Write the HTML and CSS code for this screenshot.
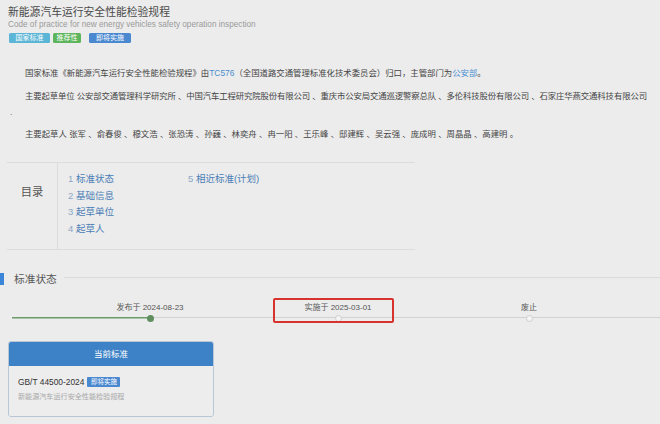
FILE: index.html
```html
<!DOCTYPE html>
<html lang="zh-CN">
<head>
<meta charset="utf-8">
<title>新能源汽车运行安全性能检验规程</title>
<link rel="stylesheet" href="styles.css">
</head>
<body>
<div class="page">
  <header class="head">
    <h1 class="title">新能源汽车运行安全性能检验规程</h1>
    <div class="subtitle">Code of practice for new energy vehicles safety operation inspection</div>
    <div class="badges">
      <span class="badge badge-cyan">国家标准</span>
      <span class="badge badge-green">推荐性</span>
      <span class="badge badge-blue">即将实施</span>
    </div>
  </header>

  <section class="intro">
    <p class="para p1">国家标准《新能源汽车运行安全性能检验规程》由<a class="link">TC576</a>（全国道路交通管理标准化技术委员会）归口，主管部门为<a class="link">公安部</a>。</p>
    <p class="para p2">主要起草单位 公安部交通管理科学研究所 、中国汽车工程研究院股份有限公司 、重庆市公安局交通巡逻警察总队 、多伦科技股份有限公司 、石家庄华燕交通科技有限公司</p>
    <div class="dot-line">.</div>
    <p class="para p3">主要起草人 张军 、俞春俊 、穆文浩 、张恐涛 、孙巍 、林奕舟 、冉一阳 、王乐峰 、邸建辉 、吴云强 、庞成明 、周晶晶 、高建明 。</p>
  </section>

  <nav class="toc">
    <div class="toc-label">目录</div>
    <div class="toc-body">
      <ul class="toc-col col1">
        <li><span class="num">1</span> 标准状态</li>
        <li><span class="num">2</span> 基础信息</li>
        <li><span class="num">3</span> 起草单位</li>
        <li><span class="num">4</span> 起草人</li>
      </ul>
      <ul class="toc-col">
        <li><span class="num">5</span> 相近标准(计划)</li>
      </ul>
    </div>
  </nav>

  <h2 class="section-title"><span class="bar"></span><span class="section-text">标准状态</span><span class="rule"></span></h2>

  <div class="timeline">
    <div class="step done">
      <div class="step-label">发布于 2024-08-23</div>
      <div class="step-dot"></div>
    </div>
    <div class="step marked">
      <div class="step-label">实施于 2025-03-01</div>
      <div class="step-dot"></div>
    </div>
    <div class="step">
      <div class="step-label">废止</div>
      <div class="step-dot"></div>
    </div>
  </div>

  <div class="card">
    <div class="card-head">当前标准</div>
    <div class="card-body">
      <div class="code">GB/T 44500-2024 <span class="badge badge-blue small">即将实施</span></div>
      <div class="card-sub">新能源汽车运行安全性能检验规程</div>
    </div>
  </div>
</div>
</body>
</html>
```
FILE: styles.css
```css
html, body {
  margin: 0;
  padding: 0;
  background: #ececec;
}
body {
  font-family: "Liberation Sans", "Noto Sans CJK SC", Arial, sans-serif;
  color: #444;
  overflow: hidden;
}
.page {
  padding: 5px 8px 0 8px;
}
.title {
  margin: 0;
  font-size: 10.8px;
  line-height: 14px;
  font-weight: normal;
  color: #4a4a4a;
}
.subtitle {
  margin-top: 1px;
  font-size: 8.2px;
  line-height: 10px;
  color: #9a9a9a;
}
.badges {
  display: flex;
  margin-top: 3px;
  margin-left: 1px;
}
.badge {
  display: inline-block;
  height: 10px;
  line-height: 10px;
  font-size: 7px;
  color: #fff;
  border-radius: 1.5px;
  text-align: center;
}
.badge-cyan { background: #5ab5d6; width: 41px; margin-right: 3px; }
.badge-green { background: #5cb55c; width: 28px; margin-right: 8px; }
.badge-blue { background: #4a88d0; width: 42px; }

.intro {
  margin-top: 22px;
}
.para {
  margin: 0;
  font-size: 8.4px;
  line-height: 16px;
  text-indent: 17px;
  color: #444;
}
.p1 { margin-bottom: 7px; }
.p2 { letter-spacing: -0.12px; white-space: nowrap; }
.link { color: #4a8fd0; }
.dot-line {
  font-size: 8.4px;
  line-height: 16px;
  padding-left: 2px;
  color: #777;
}
.p3 { margin-top: 6px; }

.toc {
  display: flex;
  width: 408px;
  margin-top: 20px;
  margin-left: -1px;
  border-top: 1px solid #dcdcdc;
  border-bottom: 1px solid #dcdcdc;
}
.toc-label {
  width: 50px;
  flex: none;
  border-right: 1px solid #dcdcdc;
  font-size: 11.3px;
  line-height: 14px;
  text-align: center;
  color: #555;
  padding-top: 22px;
}
.toc-body {
  display: flex;
  padding: 8px 0 11px 10px;
}
.toc-col {
  list-style: none;
  margin: 0;
  padding: 0;
  font-size: 9.5px;
  line-height: 16.7px;
  color: #4a7db6;
}
.col1 { width: 120px; }
.num { color: #8aa6c6; }

.section-title {
  display: flex;
  align-items: center;
  margin: 22px -8px 0 -8px;
  font-weight: normal;
  height: 14px;
}
.bar {
  width: 4px;
  height: 12px;
  background: #3b86d8;
  flex: none;
}
.section-text {
  margin-left: 10px;
  font-size: 10.7px;
  color: #555;
}
.rule {
  flex: 1;
  margin-left: 7px;
  margin-top: -3px;
  border-top: 1px solid #dadada;
}

.timeline {
  display: grid;
  grid-template-columns: 188px 188px 194px;
  padding-left: 56px;
  margin: 16px -8px 0 -8px;
  background:
    linear-gradient(#6b9a6b, #6b9a6b) 12px 15.5px / 138px 1.5px no-repeat,
    linear-gradient(#d2d2d2, #d2d2d2) 150px 15.5px / 520px 1.2px no-repeat;
}
.step {
  display: flex;
  flex-direction: column;
  align-items: center;
  position: relative;
}
.step-label {
  font-size: 8px;
  line-height: 12px;
  color: #555;
  white-space: nowrap;
}
.step-dot {
  width: 5px;
  height: 5px;
  margin-top: 1px;
  border-radius: 50%;
  border: 1px solid #cfcfcf;
  background: #f4f4f4;
}
.done .step-dot {
  width: 7px;
  height: 7px;
  border: none;
  background: #5f8f5f;
}
.marked::after {
  content: "";
  position: absolute;
  left: 29px;
  top: -4px;
  width: 117px;
  height: 21px;
  border: 2px solid #d8322c;
  border-radius: 2px;
}

.card {
  width: 204px;
  margin-top: 19px;
  border: 1px solid #b9c6d6;
  border-radius: 3px;
  overflow: hidden;
}
.card-head {
  height: 24px;
  line-height: 24px;
  background: #3d82c6;
  color: #fff;
  text-align: center;
  font-size: 8.5px;
}
.card-body {
  padding: 10px 9px 14px 9px;
  background: #ededed;
}
.code {
  font-size: 8.4px;
  line-height: 12px;
  color: #333;
  display: flex;
  align-items: center;
}
.code .small {
  margin-left: 3px;
  width: 33px;
  height: 9.5px;
  line-height: 9.5px;
  font-size: 6.5px;
  border-radius: 1px;
}
.card-sub {
  margin-top: 4px;
  font-size: 7.1px;
  line-height: 10px;
  color: #a8a8a8;
}
```
